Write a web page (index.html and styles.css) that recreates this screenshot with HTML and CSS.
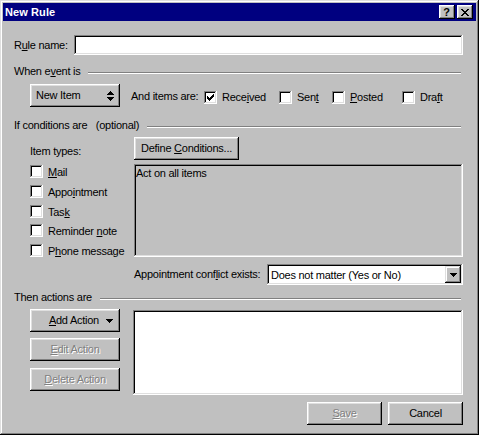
FILE: index.html
```html
<!DOCTYPE html>
<html>
<head>
<meta charset="utf-8">
<link rel="stylesheet" href="styles.css">
</head>
<body>
<div class="window">
  <div class="titlebar">
    <span class="title">New Rule</span>
    <div class="tbtns">
      <span class="tbtn help">?</span>
      <span class="tbtn close">
        <svg width="8" height="7" viewBox="0 0 8 7" shape-rendering="crispEdges"><path d="M0 0h2v1H0zM6 0h2v1H6zM1 1h2v1H1zM5 1h2v1H5zM2 2h4v1H2zM3 3h2v1H3zM2 4h4v1H2zM1 5h2v1H1zM5 5h2v1H5zM0 6h2v1H0zM6 6h2v1H6z" fill="#000"/></svg>
      </span>
    </div>
  </div>
  <div class="content">
    <div class="name-row">
      <span class="name-label">R<u>u</u>le name:</span>
      <div class="field name-input"></div>
    </div>

    <div class="group g1"><span class="gtext">When e<u>v</u>ent is</span><span class="etch"></span></div>

    <div class="event-row">
      <div class="btn new-item">
        <span>New Item</span>
        <svg width="7" height="10" viewBox="0 0 7 10" shape-rendering="crispEdges"><path d="M3 0h1v1H3zM2 1h3v1H2zM1 2h5v1H1zM0 3h7v1H0zM0 6h7v1H0zM1 7h5v1H1zM2 8h3v1H2zM3 9h1v1H3z" fill="#000"/></svg>
      </div>
      <span class="items-label">And items are:</span>
      <label class="chk-item w-received">
        <span class="chk">
          <svg width="7" height="7" viewBox="0 0 7 7" shape-rendering="crispEdges"><path d="M6 0h1v1H6zM5 1h2v1H5zM0 2h1v1H0zM4 2h3v1H4zM0 3h2v1H0zM3 3h3v1H3zM0 4h5v1H0zM1 5h3v1H1zM2 6h1v1H2z" fill="#000"/></svg>
        </span>
        <span>Rece<u>i</u>ved</span>
      </label>
      <label class="chk-item w-sent"><span class="chk"></span><span>Sen<u>t</u></span></label>
      <label class="chk-item w-posted"><span class="chk"></span><span><u>P</u>osted</span></label>
      <label class="chk-item"><span class="chk"></span><span>Dra<u>f</u>t</span></label>
    </div>

    <div class="group g2"><span class="gtext">If conditions are &nbsp;&nbsp;(optional)</span><span class="etch"></span></div>

    <div class="cond">
      <div class="types">
        <div class="types-label">Item types:</div>
        <div class="type-list">
          <label class="type-item"><span class="chk"></span><span><u>M</u>ail</span></label>
          <label class="type-item"><span class="chk"></span><span>Appo<u>i</u>ntment</span></label>
          <label class="type-item"><span class="chk"></span><span>Tas<u>k</u></span></label>
          <label class="type-item"><span class="chk"></span><span>Reminder <u>n</u>ote</span></label>
          <label class="type-item"><span class="chk"></span><span>P<u>h</u>one message</span></label>
        </div>
      </div>
      <div class="cond-right">
        <div class="btn define"><span>Define <u>C</u>onditions...</span></div>
        <div class="field cond-box">Act on all items</div>
        <div class="conflict-row">
          <span class="conflict-label">Appointment conf<u>l</u>ict exists:</span>
          <div class="field select">
            <span class="select-text">Does not matter (Yes or No)</span>
            <span class="drop-btn">
              <svg width="7" height="4" viewBox="0 0 7 4" shape-rendering="crispEdges"><path d="M0 0h7v1H0zM1 1h5v1H1zM2 2h3v1H2zM3 3h1v1H3z" fill="#000"/></svg>
            </span>
          </div>
        </div>
      </div>
    </div>

    <div class="group g3"><span class="gtext">Then actions are</span><span class="etch"></span></div>

    <div class="actions">
      <div class="action-btns">
        <div class="btn add-action">
          <span><u>A</u>dd Action</span>
          <svg width="7" height="4" viewBox="0 0 7 4" shape-rendering="crispEdges"><path d="M0 0h7v1H0zM1 1h5v1H1zM2 2h3v1H2zM3 3h1v1H3z" fill="#000"/></svg>
        </div>
        <div class="btn disabled edit-action"><span><u>E</u>dit Action</span></div>
        <div class="btn disabled delete-action"><span><u>D</u>elete Action</span></div>
      </div>
      <div class="field action-box"></div>
    </div>

    <div class="footer">
      <div class="btn disabled footer-btn"><span><u>S</u>ave</span></div>
      <div class="btn footer-btn"><span>Cancel</span></div>
    </div>
  </div>
</div>
</body>
</html>
```

FILE: styles.css
```css
* { box-sizing: border-box; }
html, body { margin: 0; padding: 0; background: #c0c0c0; }
body {
  font-family: "Liberation Sans", Arial, sans-serif;
  font-size: 11px;
  line-height: 13px;
  letter-spacing: -0.25px;
  color: #000;
  white-space: nowrap;
}
u { text-decoration: underline; text-underline-offset: 1px; }

.window {
  width: 479px;
  height: 435px;
  padding: 3px;
  background: #c0c0c0;
  box-shadow: inset -1px -1px #000, inset 1px 1px #dfdfdf, inset -2px -2px #808080, inset 2px 2px #fff;
}

.titlebar {
  height: 18px;
  background: #000080;
  display: flex;
  align-items: center;
  justify-content: space-between;
  padding: 0 3px 0 2px;
}
.title {
  color: #fff;
  font-weight: bold;
  font-size: 11px;
  letter-spacing: 0.1px;
}
.tbtns { display: flex; gap: 2px; }
.tbtn {
  width: 16px;
  height: 14px;
  background: #c0c0c0;
  box-shadow: inset -1px -1px #000, inset 1px 1px #fff, inset -2px -2px #808080, inset 2px 2px #dfdfdf;
  display: flex;
  align-items: center;
  justify-content: center;
}
.help { font-weight: bold; font-size: 11px; line-height: 14px; padding-right: 1px; }
.close svg { display: block; margin-left: -1px; }

.content { padding: 0 13px 0 11px; }

.field {
  background: #fff;
  box-shadow: inset -1px -1px #fff, inset 1px 1px #808080, inset -2px -2px #dfdfdf, inset 2px 2px #000;
}

.btn {
  background: #c0c0c0;
  box-shadow: inset -1px -1px #000, inset 1px 1px #fff, inset -2px -2px #808080, inset 2px 2px #dfdfdf;
  height: 23px;
  display: flex;
  align-items: center;
  justify-content: center;
}
.btn.disabled { color: #808080; text-shadow: 1px 1px #fff; }

.name-row {
  margin-top: 14px;
  display: flex;
  align-items: center;
  height: 20px;
}
.name-label { width: 60px; }
.name-input { flex: 1; height: 20px; }

.group {
  display: flex;
  align-items: center;
  height: 13px;
  padding-right: 2px;
}
.gtext { white-space: pre; }
.etch {
  flex: 1;
  height: 2px;
  border-top: 1px solid #808080;
  border-bottom: 1px solid #fff;
  margin-left: 8px;
  margin-top: 2px;
}
.g1 { margin-top: 10px; }
.g2 { margin-top: 12px; }
.g3 { margin-top: 6px; }

.event-row {
  margin-top: 6px;
  margin-left: 16px;
  display: flex;
  align-items: center;
  height: 23px;
}
.new-item {
  width: 90px;
  justify-content: space-between;
  padding: 0 6px 0 6px;
}
.new-item svg { display: block; margin-top: 1px; }
.items-label { margin-left: 11px; width: 73px; flex: none; padding-top: 2px; }

.chk {
  width: 13px;
  height: 13px;
  flex: none;
  background: #fff;
  box-shadow: inset -1px -1px #fff, inset 1px 1px #808080, inset -2px -2px #dfdfdf, inset 2px 2px #000;
  display: flex;
  align-items: center;
  justify-content: center;
}
.chk svg { display: block; }
.chk-item {
  display: flex;
  align-items: center;
  gap: 5px;
  padding-top: 3px;
  flex: none;
}
.chk-item > span:last-child { padding-top: 1px; }
.w-received { width: 75px; }
.w-sent { width: 53px; }
.w-posted { width: 70px; }

.cond {
  margin-top: 5px;
  margin-left: 16px;
  display: flex;
}
.types { width: 104px; flex: none; }
.types-label { margin-top: 8px; }
.type-list { margin-top: 7px; }
.type-item {
  display: flex;
  align-items: flex-start;
  gap: 5px;
  height: 19.75px;
}
.type-item > span:last-child { padding-top: 1px; }

.cond-right { width: 329px; flex: none; }
.define { width: 105px; }
.cond-box {
  margin-top: 4px;
  height: 93px;
  background: #c0c0c0;
  padding: 3px 2px;
}
.conflict-row {
  margin-top: 7px;
  display: flex;
  align-items: center;
}
.conflict-label { width: 133px; flex: none; }
.select {
  width: 196px;
  height: 21px;
  flex: none;
  display: flex;
  align-items: center;
  justify-content: space-between;
  padding: 2px;
}
.select-text { padding-left: 2px; padding-top: 1px; }
.drop-btn {
  width: 16px;
  height: 17px;
  background: #c0c0c0;
  box-shadow: inset -1px -1px #000, inset 1px 1px #dfdfdf, inset -2px -2px #808080, inset 2px 2px #fff;
  display: flex;
  align-items: center;
  justify-content: center;
}
.drop-btn svg { display: block; }

.actions {
  margin-top: 5px;
  margin-left: 16px;
  display: flex;
  gap: 13px;
}
.action-btns { width: 90px; flex: none; }
.add-action { justify-content: flex-end; padding-right: 7px; gap: 7px; }
.add-action svg { display: block; }
.edit-action { margin-top: 6px; }
.delete-action { margin-top: 7px; }
.action-box { margin-top: 1px; width: 330px; height: 85px; flex: none; }

.footer {
  margin-top: 7px;
  display: flex;
  justify-content: flex-end;
  gap: 6px;
}
.footer-btn { width: 75px; }
```
